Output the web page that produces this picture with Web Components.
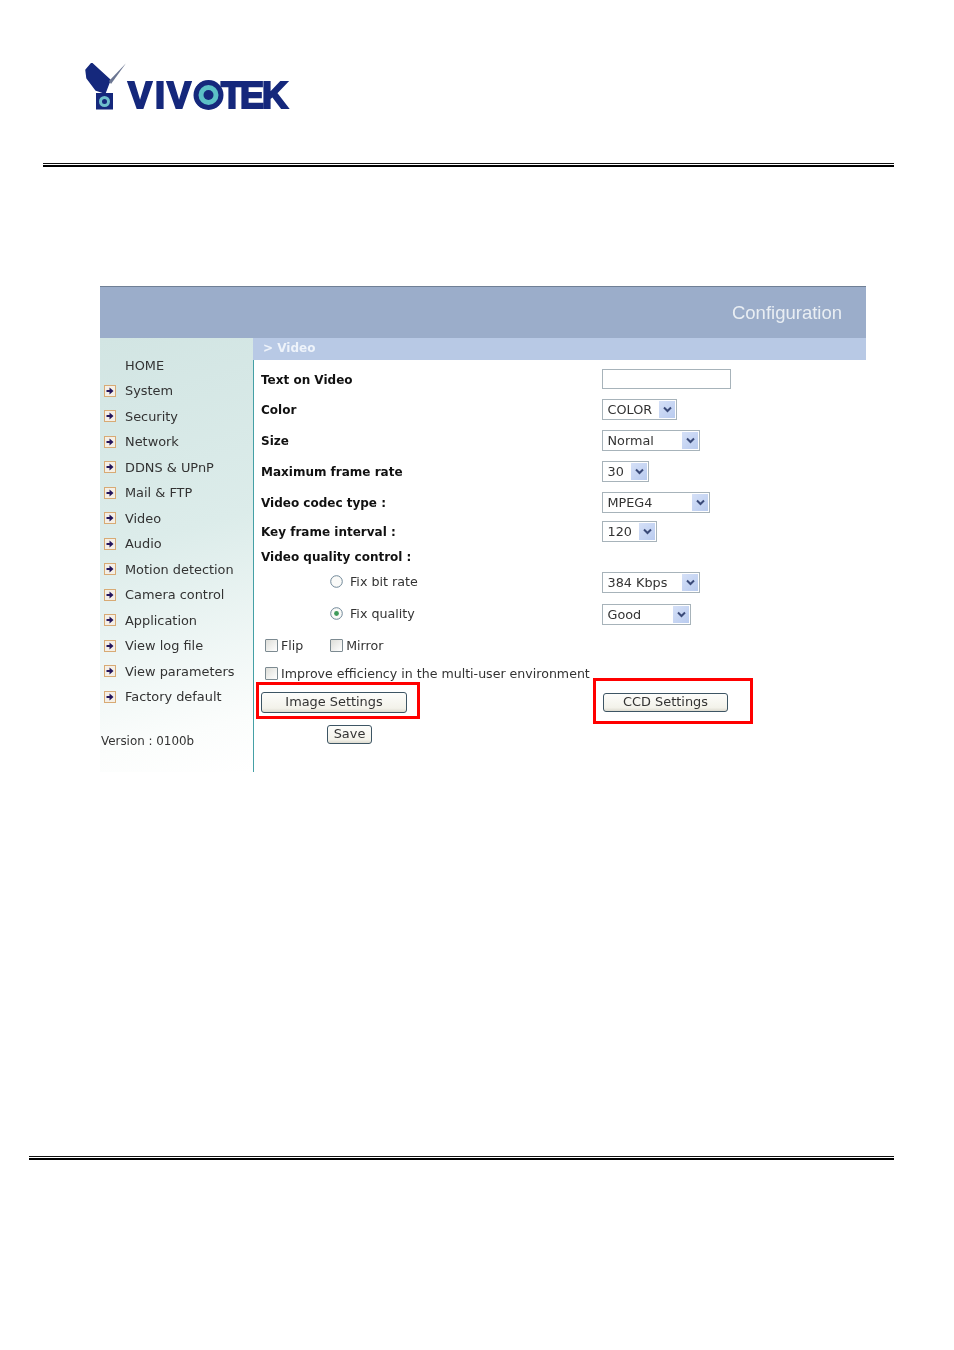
<!DOCTYPE html>
<html lang="en">
<head>
<meta charset="utf-8">
<title>Video configuration</title>
<style>
  html, body { margin: 0; background: #fff; }
  body { font-family: "DejaVu Sans", sans-serif; }
</style>
</head>
<body>
<manual-page>
  <vivotek-logo slot="logo"></vivotek-logo>
  <double-rule slot="top-rule" style="--left: 43px"></double-rule>
  <config-panel slot="panel" title-text="Configuration" section="&gt; Video" version="Version : 0100b">
    <nav-item plain>HOME</nav-item>
    <nav-item>System</nav-item>
    <nav-item>Security</nav-item>
    <nav-item>Network</nav-item>
    <nav-item>DDNS &amp; UPnP</nav-item>
    <nav-item>Mail &amp; FTP</nav-item>
    <nav-item>Video</nav-item>
    <nav-item>Audio</nav-item>
    <nav-item>Motion detection</nav-item>
    <nav-item>Camera control</nav-item>
    <nav-item>Application</nav-item>
    <nav-item>View log file</nav-item>
    <nav-item>View parameters</nav-item>
    <nav-item>Factory default</nav-item>
    <video-form slot="form"></video-form>
  </config-panel>
  <double-rule slot="bottom-rule" style="--left: 29px"></double-rule>
</manual-page>

<script>
'use strict'

const define = (name, css, html, setup) => {
  customElements.define(name, class extends HTMLElement {
    constructor() {
      super()
      this.attachShadow({ mode: 'open' }).innerHTML = `<style>${css}</style>${html}`
    }
    connectedCallback() {
      if (setup) setup(this, this.shadowRoot)
    }
  })
}

// page frame
define('manual-page', `
  :host { display: block; width: 954px; height: 1350px; overflow: hidden; }
  .logo { padding: 63px 0 0 85px; height: 163px; box-sizing: border-box; }
  .panel { padding: 119px 0 0 100px; height: 989px; box-sizing: border-box; }
`, `
  <div class="logo"><slot name="logo"></slot></div>
  <slot name="top-rule"></slot>
  <div class="panel"><slot name="panel"></slot></div>
  <slot name="bottom-rule"></slot>
`)

define('vivotek-logo', `
  :host { display: block; width: 212px; height: 60px; filter: blur(.4px); }
  svg { display: block; }
  text { font: 700 36px "Liberation Sans", sans-serif; fill: #15287c; stroke: #15287c; stroke-width: 2px; }
`, `
  <svg width="212" height="60" viewBox="0 0 212 60">
    <path d="M1 7 L6.700 .3 L25 17 L20 30 L11 27 L2 15Z" fill="#15287c" stroke="#15287c" stroke-linejoin="round" stroke-width="1.500"/>
    <path d="M24 18 L41 .3 L26 21Z" fill="#6b7692"/>
    <rect x="11" y="30" width="17" height="16.500" fill="#15287c"/>
    <circle cx="19.500" cy="38.500" r="5.500" fill="#6fc0cc"/>
    <circle cx="19.500" cy="38.500" r="2.500" fill="#15287c"/>
    <text y="45" x="43 70 82 109 136 155 177">VIVOTEK</text>
    <circle cx="123.500" cy="32" r="15" fill="#15287c"/>
    <circle cx="123.500" cy="32" r="10" fill="#5cc0c6"/>
    <circle cx="123.500" cy="32" r="5" fill="#15287c"/>
  </svg>
`)

define('double-rule', `
  :host { display: block; margin-left: var(--left); width: calc(894px - var(--left)); height: 4px;
    box-sizing: border-box; border-top: 1px solid #111; border-bottom: 2px solid #000; }
`, '')

// configuration screenshot
define('config-panel', `
  :host { display: grid; grid-template-columns: 153px 613px; grid-template-rows: 52px 1fr;
    width: 766px; height: 486px; font-size: 12.900px; color: #333; filter: blur(.3px); }
  .head { grid-column: 1 / 3; background: #9badca; border-top: 1px solid #6f7f95; box-sizing: border-box;
    display: flex; justify-content: flex-end; align-items: center; padding: 1px 24px 0 0;
    color: #e9eef3; font: 18.500px "Liberation Sans", sans-serif; }
  aside { background: linear-gradient(165deg, #d2e5e3 0%, #dcecea 45%, #fbfdfc 88%, #fff 100%);
    padding: 14.500px 0 0 0; box-sizing: border-box; display: flex; flex-direction: column; }
  .version { margin: 18.500px 0 0 1px; height: 26px; line-height: 26px; font-size: 11.900px; color: #333; }
  .body { display: grid; grid-template-rows: 22px 1fr; min-height: 0; }
  .crumb { background: #b8c9e5; color: #eef3fa; font-weight: 700; font-size: 12px; line-height: 20px; padding-left: 10px; }
  .main { border-left: 1px solid #45a0a6; background: #fff; }
`, `
  <div class="head"></div>
  <aside><slot></slot><div class="version"></div></aside>
  <div class="body">
    <div class="crumb"></div>
    <div class="main"><slot name="form"></slot></div>
  </div>
`, (el, root) => {
  root.querySelector('.head').textContent = el.getAttribute('title-text')
  root.querySelector('.crumb').textContent = el.getAttribute('section')
  root.querySelector('.version').textContent = el.getAttribute('version')
})

define('nav-item', `
  :host { display: flex; align-items: center; height: 25.500px; padding-left: 4px; color: #333; font-size: 12.900px; white-space: nowrap; }
  svg { flex: none; margin-right: 9px; }
  :host([plain]) svg { visibility: hidden; }
`, `
  <svg width="12" height="12" viewBox="0 0 12 12">
    <rect x=".5" y=".5" width="11" height="11" fill="#f4efe6" stroke="#d8aa74"/>
    <path d="M2.500 5h3V2.600L9.500 6l-4 3.400V7h-3z" fill="#23145c"/>
  </svg>
  <slot></slot>
`)

define('vt-select', `
  :host { display: inline-flex; align-items: center; justify-content: space-between; box-sizing: border-box;
    height: 21px; padding: 1px; border: 1px solid #a7b3ba; background: #fff; font-size: 12.800px; color: #333; }
  .label { padding-left: 3.500px; white-space: nowrap; }
  .btn { flex: none; width: 16px; height: 17px; background: linear-gradient(135deg, #d5e0f7, #b9cbef); display: flex; align-items: center; justify-content: center; }
`, `
  <span class="label"><slot></slot></span>
  <span class="btn"><svg width="9" height="7" viewBox="0 0 9 7"><path d="M1 1.500l3.500 3.500L8 1.500" fill="none" stroke="#3a4a78" stroke-width="2"/></svg></span>
`, (el) => { el.style.width = el.getAttribute('w') + 'px' })

define('vt-check', `
  :host { display: inline-flex; align-items: center; font-size: 12.600px; color: #333; white-space: nowrap; }
  i { width: 11px; height: 11px; border: 1px solid #7c8a91; background: linear-gradient(135deg, #ddddd8, #fff); margin-right: 3px; border-radius: 1px; }
`, `<i></i><slot></slot>`)

define('vt-radio', `
  :host { display: inline-flex; align-items: center; font-size: 12.700px; color: #333; white-space: nowrap; }
  svg { margin-right: 7px; }
`, `
  <svg width="13" height="13" viewBox="0 0 13 13">
    <circle cx="6.500" cy="6.500" r="5.800" fill="#fafaf8" stroke="#6f8798"/>
    <circle class="dot" cx="6.500" cy="6.500" r="2.400" fill="#3f9a5a"/>
  </svg>
  <slot></slot>
`, (el, root) => {
  if (!el.hasAttribute('checked')) root.querySelector('.dot').remove()
})

define('vt-button', `
  :host { display: inline-block; position: relative; }
  .btn { display: flex; align-items: center; justify-content: center; box-sizing: border-box; height: var(--h, 21px); width: var(--w);
    padding-bottom: 1px; border: 1px solid #3d5564; border-radius: 3px; background: linear-gradient(#fdfdfb, #f3f2ea 80%, #dddbd0);
    color: #333; font-size: 12.900px; white-space: nowrap; }
  .mark { display: none; position: absolute; border: 3px solid #f00; box-sizing: border-box; }
  :host([marked]) .mark { display: block; top: var(--mt); right: var(--mr); bottom: var(--mb); left: var(--ml); }
`, `<div class="btn"><slot></slot></div><div class="mark"></div>`)

// form body, row heights follow the original table
define('video-form', `
  :host { display: grid; grid-template-columns: 341px auto; justify-items: start; align-items: center; padding: 4px 0 0 7px;
    grid-template-rows: 30.500px 30px 31px 32px 30.500px 26px 25px 27px 36px 26px 32px 24px 40px;
    font-size: 12px; color: #111; }
  b { font-weight: 700; color: #111; padding-top: 1px; }
  .in { box-sizing: border-box; width: 129px; height: 20px; border: 1px solid #a7b3ba; background: #fff; }
  .opt { padding-left: 69px; }
  .checks { display: flex; gap: 27px; padding-left: 4px; }
  .wide { grid-column: 1 / 3; padding: 1px 0 0 4px; }
  .save { padding-left: 66px; }
  .blank { display: block; }
`, `
  <b>Text on Video</b><div class="in"></div>
  <b>Color</b><vt-select w="75">COLOR</vt-select>
  <b>Size</b><vt-select w="98">Normal</vt-select>
  <b>Maximum frame rate</b><vt-select w="47">30</vt-select>
  <b>Video codec type :</b><vt-select w="108">MPEG4</vt-select>
  <b>Key frame interval :</b><vt-select w="55">120</vt-select>
  <b>Video quality control :</b><span class="blank"></span>
  <div class="opt"><vt-radio>Fix bit rate</vt-radio></div><vt-select w="98">384 Kbps</vt-select>
  <div class="opt"><vt-radio checked>Fix quality</vt-radio></div><vt-select w="89">Good</vt-select>
  <div class="checks"><vt-check>Flip</vt-check><vt-check>Mirror</vt-check></div><span class="blank"></span>
  <div class="wide"><vt-check>Improve efficiency in the multi-user environment</vt-check></div>
  <vt-button marked style="--w:146px;--mt:-10px;--mr:-13px;--mb:-6px;--ml:-5px">Image Settings</vt-button>
  <vt-button marked style="--w:125px;--h:19px;--mt:-15px;--mr:-25px;--mb:-12px;--ml:-10px;margin-left:1px">CCD Settings</vt-button>
  <div class="save"><vt-button style="--w:45px;--h:19px">Save</vt-button></div><span class="blank"></span>
`)
</script>
</body>
</html>
